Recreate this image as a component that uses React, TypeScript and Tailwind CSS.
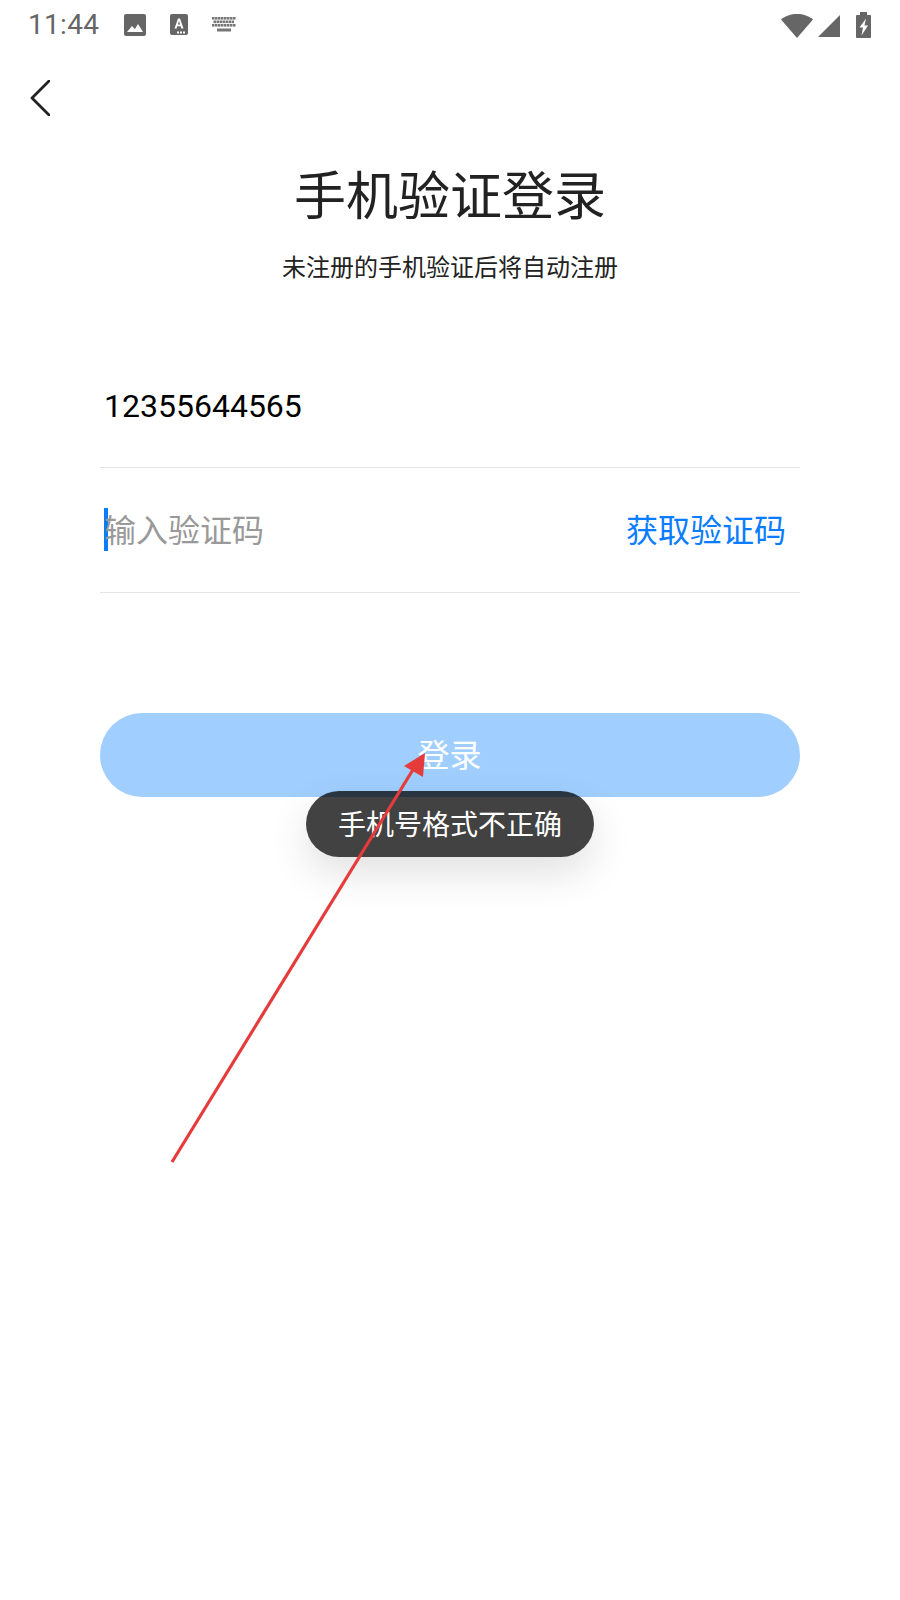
import React from "react";

const cjk = '"Noto Sans CJK SC", sans-serif';
const num = 'Roboto, "Noto Sans CJK SC", sans-serif';

const keyRows = [
  { y: 0, xs: [0, 3, 6, 9, 12, 15, 18, 21] },
  { y: 3.5, xs: [1.5, 4.5, 7.5, 10.5, 13.5, 16.5, 19.5] },
  { y: 7, xs: [0, 3, 6, 9, 12, 15, 18, 21] },
];

function StatusBar() {
  return (
    <div className="flex h-[50px] items-center justify-between pl-[28px] pr-[29px] text-[#666666]">
      <div className="flex items-center">
        <span className="text-[28px] leading-[50px] tracking-[0.3px] text-[#666666]" style={{ fontFamily: num }}>11:44</span>
        <svg width="24" height="24" viewBox="0 0 24 24" className="ml-[24px] -mt-[1px]">
          <rect x="1" y="1" width="22" height="22" rx="2" fill="#666666" />
          <path d="M4 19l5-6 3 3 3-5 5 8z" fill="#ffffff" />
        </svg>
        <svg width="20" height="22" viewBox="0 0 20 22" className="ml-[22px] -mt-[1px]">
          <rect x="1" y="0" width="18" height="21" rx="2" fill="#666666" />
          <path d="M5.5 14.5L9 4.5h2l3.5 10h-2.2l-.7-2.3H8.3l-.7 2.3zM8.9 10.5h2.2L10 7z" fill="#ffffff" />
          <rect x="8" y="17.5" width="2" height="2" fill="#ffffff" />
          <rect x="11" y="17.5" width="2" height="2" fill="#ffffff" />
          <rect x="14" y="17.5" width="2" height="2" fill="#ffffff" />
        </svg>
        <svg width="24" height="15" viewBox="0 0 24 15" className="ml-[23px] -mt-[2px]" fill="#777777">
          {keyRows.map((r) => r.xs.map((x) => <rect key={`${r.y}-${x}`} x={x} y={r.y} width="2.5" height="2.6" />))}
          <path d="M5 11.5h14v3H5z" />
        </svg>
      </div>
      <div className="flex items-center">
        <svg width="32" height="25" viewBox="0 0 32 25" fill="#666666">
          <path d="M0 6.5C4 3 10 1 16 1s12 2 16 5.5L16 25z" />
        </svg>
        <svg width="22" height="22" viewBox="0 0 22 22" className="ml-[5px] mt-[1px]" fill="#666666">
          <path d="M0 22L22 0v22z" />
        </svg>
        <svg width="15" height="26" viewBox="0 0 15 26" className="ml-[16px]">
          <path d="M4 0h7v3h3a1 1 0 0 1 1 1v21a1 1 0 0 1-1 1H1a1 1 0 0 1-1-1V4a1 1 0 0 1 1-1h3z" fill="#666666" />
          <path d="M10 6.5L3.5 15.5H7l-1.5 8L12 13.5H8.5z" fill="#ffffff" />
        </svg>
      </div>
    </div>
  );
}

export default function App() {
  return (
    <div className="relative h-[1600px] w-[900px] overflow-hidden bg-white" style={{ fontFamily: cjk }}>
      <StatusBar />
      <div className="pl-[30px] pt-[30px]">
        <svg width="20" height="36" viewBox="0 0 20 36" fill="none" stroke="#222222" strokeWidth="2.8" strokeLinecap="round" strokeLinejoin="round">
          <path d="M19 1L2 18l17 17" />
        </svg>
      </div>
      <h1 className="mt-[41px] text-center text-[52px] font-normal leading-[72px] text-[#222222]">手机验证登录</h1>
      <p className="mt-[20px] text-center text-[24px] leading-[34px] text-[#222222]">未注册的手机验证后将自动注册</p>
      <div className="mx-[100px] mt-[64px]">
        <div className="flex h-[121px] items-start border-b border-[#e4e4e4] pl-[4px] pt-[37px]">
          <span className="text-[32px] leading-[44px] text-black" style={{ fontFamily: num }}>12355644565</span>
        </div>
        <div className="flex h-[125px] items-center justify-between border-b border-[#e4e4e4] pb-[1px] pl-[4px] pr-[14px]">
          <div className="flex items-center">
            <span className="h-[43px] w-[4px] bg-[#0a7cff]" />
            <span className="-ml-[4px] mb-[3px] text-[32px] leading-[44px] text-[#999999]">输入验证码</span>
          </div>
          <span className="mb-[3px] text-[32px] leading-[44px] text-[#0a7cff]">获取验证码</span>
        </div>
        <button className="mt-[120px] flex h-[84px] w-full items-center justify-center rounded-[42px] bg-[#a0cfff] pb-[4px] pr-[1px] text-[32px] text-white">登录</button>
      </div>
      <div className="absolute left-[306px] top-[791px] flex h-[66px] w-[288px] items-center justify-center rounded-[33px] bg-[rgba(0,0,0,0.74)] pb-[3px] text-[28px] text-white shadow-[0_16px_40px_rgba(0,0,0,0.12)]">
        手机号格式不正确
      </div>
      <svg className="absolute left-0 top-0" width="900" height="1600" viewBox="0 0 900 1600" fill="none">
        <path d="M172 1162L414 768" stroke="#e53b3b" strokeWidth="3.2" />
        <path d="M425 753L404 766L423 777z" fill="#e53b3b" />
      </svg>
    </div>
  );
}
